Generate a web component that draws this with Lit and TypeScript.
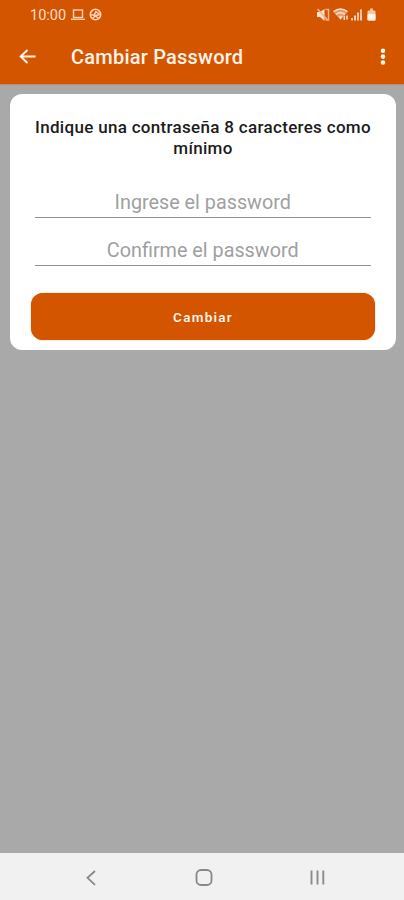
import { LitElement, html, css } from "lit";
import { customElement } from "lit/decorators.js";

@customElement("app-root")
export class AppRoot extends LitElement {
  static styles = css`
    :host {
      display: flex;
      flex-direction: column;
      height: 900px;
      background: #a9a9a9;
      font-family: Roboto, "Liberation Sans", sans-serif;
      overflow: hidden;
    }
    svg { display: block; flex: none; }
    .top { background: #d45500; color: #fff3ea; height: 84px; flex: none; box-shadow: 0 1px 1px #b5917f; }
    .status { height: 30px; display: flex; align-items: center; padding: 0 26px 0 30px; box-sizing: border-box; }
    .time { font-size: 14.5px; line-height: 28px; padding-top: 2px; width: 41px; color: #ffdfcc; white-space: nowrap; }
    .grow { flex: 1; }
    .bar { height: 54px; display: flex; align-items: center; padding: 0 13px 0 18px; }
    h1 { margin: 0 0 0 34px; flex: 1; font-size: 20px; line-height: 54px; font-weight: 500; letter-spacing: 0.22px; white-space: nowrap; }
    .card { margin: 10px 8.5px 0 10px; height: 256px; flex: none; box-sizing: border-box; background: #fff; border-radius: 12px; padding: 23px 20.5px 10px 21px; display: flex; flex-direction: column; }
    h2 { margin: 0; text-align: center; font-size: 17px; line-height: 20.5px; font-weight: 500; letter-spacing: 0.31px; color: #1c1c1c; white-space: nowrap; }
    .field { margin: 0 4px 0 3.5px; border-bottom: 1px solid #929292; text-align: center; color: #a0a0a0; font-size: 19.8px; line-height: 28px; height: 28px; }
    .first { margin-top: 31px; }
    .second { margin-top: 19px; }
    button { margin: 27px 0 0; height: 47px; border: 0; border-radius: 12px; background: #d45500; color: #fff3ea; font: 600 13.5px/48px Roboto, "Liberation Sans", sans-serif; letter-spacing: 1.25px; padding: 0; box-shadow: 0 0 1px #d45500; }
    nav { margin-top: auto; height: 47px; flex: none; background: #f1f1f1; display: flex; align-items: center; justify-content: space-between; padding: 2px 78px 0 83px; box-sizing: border-box; }
  `;

  render() {
    return html`
      <header class="top">
        <div class="status">
          <span class="time">10:00</span>
          <svg width="32" height="16" viewBox="0 0 32 16" fill="none" stroke="#ffd0b5" stroke-width="1.4">
            <rect x="2.5" y="3" width="9" height="7.500"/><path d="M0 12.300h14"/>
            <circle cx="24.500" cy="7.500" r="5.200" stroke-width="1.600"/><path d="M19.500 8h3.800l1.500-3.500 3.500 2.500M22 11l2.500-2.200 2.500 2.200M24.500 8.500l4.500-1"/>
          </svg>
          <span class="grow"></span>
          <svg width="62" height="16" viewBox="0 0 62 16" fill="#ffe1d0">
            <path d="M1 5h3l4.500-3v12L4 10H1z"/><path d="M9.500 2.500h3v10.500h-3M1.500 2l10 11" fill="none" stroke="#f4b48f" stroke-width="1.500"/>
            <path d="M17 4.500Q24.500-1 32 4.500L24.500 13z" fill="#e99a6c"/>
            <g fill="none" stroke="#ffe1d0" stroke-width="1.500"><path d="M17.500 4.500Q24.500-.5 31.500 4.500M20 7.300q4.500-3 9 0"/></g>
            <path d="M22.500 9.500q2-1.500 4 0l-2 3z"/><path d="M28.300 13V8.800M31 8.500V12.500" stroke="#ffe1d0" stroke-width="1.500"/>
            <g fill="#f9c9ad"><rect x="35" y="11" width="2" height="2.500"/><rect x="38" y="8.500" width="2" height="5"/><rect x="41" y="5.500" width="2" height="8"/><rect x="44" y="2.500" width="2" height="11"/></g>
            <path d="M54 1.500h3v2h1.500q1 0 1 1v8q0 1-1 1h-6q-1 0-1-1v-8q0-1 1-1H54z" fill="#f9c6a7"/><rect x="51.500" y="7" width="8" height="6.500" rx="1" fill="#fff3ea"/>
          </svg>
        </div>
        <div class="bar">
          <svg width="19" height="18" viewBox="0 0 19 18" fill="none" stroke="#fff3ea" stroke-width="2"><path d="M17.500 8.500H3M9.500 2 2.700 8.500l6.800 6.500"/></svg>
          <h1>Cambiar Password</h1>
          <svg width="16" height="18" viewBox="0 0 16 18" fill="#fff3ea"><circle cx="8" cy="2.800" r="2.300"/><circle cx="8" cy="8.600" r="2.300"/><circle cx="8" cy="14.500" r="2.300"/></svg>
        </div>
      </header>
      <main class="card">
        <h2>Indique una contraseña 8 caracteres como<br>mínimo</h2>
        <div class="field first">Ingrese el password</div>
        <div class="field second">Confirme el password</div>
        <button>Cambiar</button>
      </main>
      <nav>
        <svg width="16" height="18" viewBox="0 0 16 18" fill="none" stroke="#888" stroke-width="1.800"><path d="M12 2 4.500 8.800l7.500 7"/></svg>
        <svg width="18" height="18" viewBox="0 0 18 18" fill="none" stroke="#888" stroke-width="1.800"><rect x="1.500" y="1" width="15" height="15" rx="4.500"/></svg>
        <svg width="18" height="18" viewBox="0 0 18 18" fill="none" stroke="#8c8c8c" stroke-width="1.900"><path d="M3.500 1.500v14M9.500 1.500v14M15.300 1.500v14"/></svg>
      </nav>
    `;
  }
}
